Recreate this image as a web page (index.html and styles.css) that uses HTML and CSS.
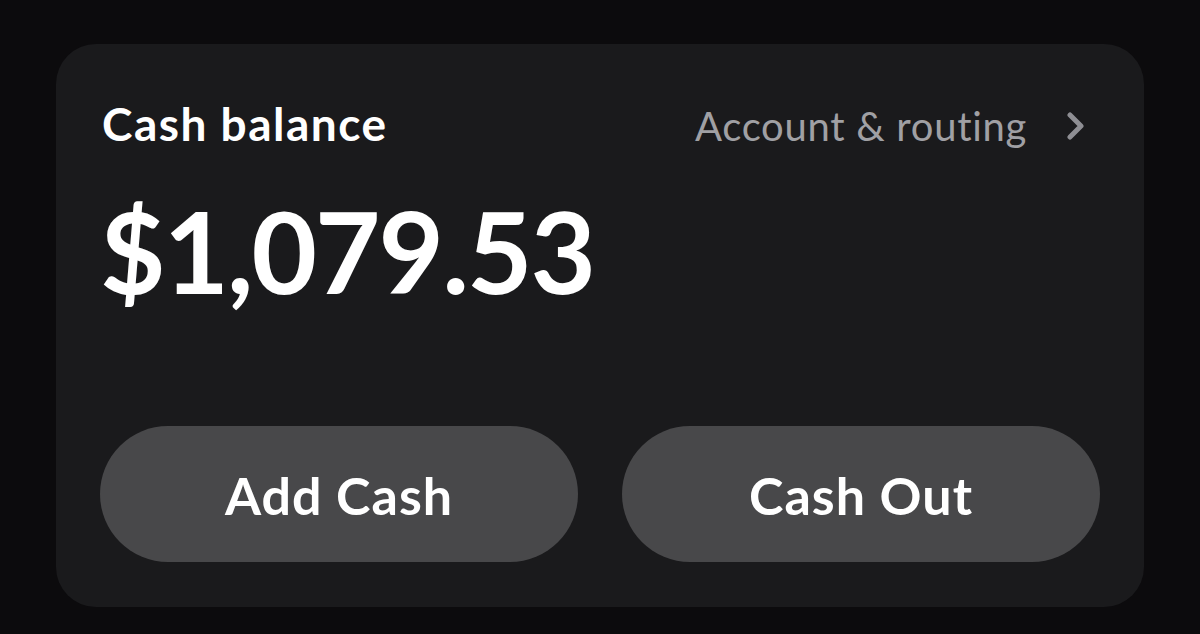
FILE: index.html
```html
<!DOCTYPE html>
<html lang="en">
<head>
    <meta charset="UTF-8">
    <title>Cash balance</title>
    <link rel="stylesheet" href="styles.css">
</head>
<body>
    <div class="card">
        <div class="card-header">
            <span class="card-title">Cash balance</span>
            <a href="#" class="routing-link">
                <span>Account &amp; routing</span>
                <svg class="chevron" width="18" height="28" viewBox="0 0 18 28">
                    <polyline points="3,3 14,14 3,25" fill="none" stroke="currentColor" stroke-width="5" stroke-linecap="round" stroke-linejoin="round"/>
                </svg>
            </a>
        </div>

        <div class="balance">$1,079.53</div>

        <div class="actions">
            <button class="action-btn">Add Cash</button>
            <button class="action-btn">Cash Out</button>
        </div>
    </div>
</body>
</html>
```

FILE: styles.css
```css
    body {
        font-family: 'Lato', 'Liberation Sans', sans-serif;
        font-variant-ligatures: none;
        background: #0c0b0d;
        margin: 0;
        padding: 44px 56px;
        color: #fff;
    }

    .card {
        box-sizing: border-box;
        height: 563px;
        background: #1a1a1c;
        border-radius: 40px;
        padding: 57px 44px 45px 44px;
        display: flex;
        flex-direction: column;
    }

    .card-header {
        display: flex;
        justify-content: space-between;
        align-items: baseline;
        padding: 0 15px 0 2px;
    }

    .card-title {
        font-size: 46px;
        font-weight: bold;
        line-height: 1;
        letter-spacing: 1.5px;
    }

    .routing-link {
        display: flex;
        align-items: center;
        gap: 40px;
        text-decoration: none;
        color: #a0a0a4;
        font-size: 40px;
        line-height: 1;
        letter-spacing: 0.7px;
    }

    .chevron {
        color: #8e8e93;
    }

    .balance {
        margin-top: 47px;
        font-size: 113px;
        font-weight: bold;
        line-height: 1;
        letter-spacing: -2px;
    }

    .actions {
        margin-top: auto;
        display: grid;
        grid-template-columns: 1fr 1fr;
        gap: 44px;
    }

    .action-btn {
        height: 136px;
        border: none;
        border-radius: 68px;
        background: #48484a;
        color: #fff;
        font-family: inherit;
        font-size: 52px;
        font-weight: bold;
        letter-spacing: 1px;
        padding-top: 2px;
        cursor: pointer;
    }
```
